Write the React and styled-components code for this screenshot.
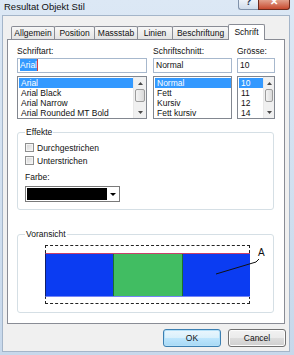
import styled, { createGlobalStyle } from "styled-components";

const GlobalStyle = createGlobalStyle`
  html, body { margin: 0; padding: 0; }
  body {
    font-family: "Liberation Sans", Arial, sans-serif;
    font-size: 8.5px;
    color: #111;
    background: #cfdff0;
  }
  * { box-sizing: border-box; }
`;

const tabs = [
  { name: "Allgemein", w: 44 },
  { name: "Position", w: 41 },
  { name: "Massstab", w: 44 },
  { name: "Linien", w: 36 },
  { name: "Beschriftung", w: 57 },
  { name: "Schrift", w: 37 },
];

const fonts = ["Arial", "Arial Black", "Arial Narrow", "Arial Rounded MT Bold"];
const styles = ["Normal", "Fett", "Kursiv", "Fett kursiv"];
const sizes = ["10", "11", "12", "14"];

function Arrow({ down }) {
  return (
    <svg width="5" height="3" viewBox="0 0 5 3">
      <path d={down ? "M0 0H5L2.5 3Z" : "M0 3H5L2.5 0Z"} fill="#4a4a4a" />
    </svg>
  );
}

function ScrollBar({ w }) {
  return (
    <Scroll $w={w}>
      <ScrollArrow><Arrow /></ScrollArrow>
      <Thumb />
      <ScrollArrow><Arrow down /></ScrollArrow>
    </Scroll>
  );
}

function ListBox({ items, scrollW }) {
  return (
    <List>
      <Items>
        {items.map((it, i) => (
          <Item key={it} $selected={i === 0}>{it}</Item>
        ))}
      </Items>
      <ScrollBar w={scrollW} />
    </List>
  );
}

export default function App() {
  return (
    <>
      <GlobalStyle />
      <Window>
        <TitleBar>
          <Title>Resultat Objekt Stil</Title>
          <Caption>
            <HelpButton>?</HelpButton>
            <CloseButton>✕</CloseButton>
          </Caption>
        </TitleBar>
        <Client>
          <TabStrip>
            {tabs.map((t) => (
              <Tab key={t.name} $w={t.w} $active={t.name === "Schrift"}>
                {t.name}
              </Tab>
            ))}
          </TabStrip>
          <Panel>
            <FontRow>
              <Column $w={130}>
                <Label>Schriftart:</Label>
                <TextBox><Selection>Arial</Selection></TextBox>
                <ListBox items={fonts} scrollW={13} />
              </Column>
              <Column $w={79}>
                <Label>Schriftschnitt:</Label>
                <TextBox>Normal</TextBox>
                <ListBox items={styles} scrollW={0} />
              </Column>
              <Column $w={38}>
                <Label>Grösse:</Label>
                <TextBox>10</TextBox>
                <ListBox items={sizes} scrollW={11} />
              </Column>
            </FontRow>

            <Group>
              <Legend>Effekte</Legend>
              <CheckRow><CheckBox />Durchgestrichen</CheckRow>
              <CheckRow><CheckBox />Unterstrichen</CheckRow>
              <FieldLabel>Farbe:</FieldLabel>
              <ColorSelect>
                <Swatch />
                <DropArrow>
                  <svg width="6" height="3" viewBox="0 0 6 3">
                    <path d="M0 0H6L3 3Z" fill="#000" />
                  </svg>
                </DropArrow>
              </ColorSelect>
            </Group>

            <Group $gap={19}>
              <Legend>Voransicht</Legend>
              <PreviewBox>
                <Bar>
                  <Segment $color="#0b3cf2" />
                  <Segment $color="#41bd62" $edged />
                  <Segment $color="#0b3cf2" />
                </Bar>
                <Leader width="50" height="40" viewBox="0 0 50 40">
                  <path d="M0 28L40 16L43 13" stroke="#111" strokeWidth="1" fill="none" />
                </Leader>
                <Marker>A</Marker>
              </PreviewBox>
            </Group>
          </Panel>
          <ButtonRow>
            <Button $default>OK</Button>
            <Button>Cancel</Button>
          </ButtonRow>
        </Client>
      </Window>
    </>
  );
}

const Window = styled.div`
  width: 294px;
  height: 355px;
  display: flex;
  flex-direction: column;
  padding: 0 4px 3px 2px;
  background: linear-gradient(#dce8f5, #c7d8eb);
`;

const TitleBar = styled.div`
  height: 15px;
  display: flex;
  justify-content: space-between;
  align-items: flex-start;
`;

const Title = styled.div`
  font-size: 9.5px;
  line-height: 14px;
  padding-left: 2px;
  color: #111;
`;

const Caption = styled.div`
  display: flex;
`;

const HelpButton = styled.div`
  width: 20px;
  height: 10px;
  overflow: hidden;
  border: 1px solid #8193ab;
  border-top: none;
  border-right: none;
  border-radius: 0 0 0 3px;
  background: linear-gradient(#eef3f9, #cfdbea);
  color: #2a3855;
  font-size: 10px;
  font-weight: bold;
  line-height: 4px;
  text-align: center;
`;

const CloseButton = styled.div`
  width: 32px;
  height: 10px;
  overflow: hidden;
  border: 1px solid #6d2a1d;
  border-top: none;
  border-radius: 0 0 3px 0;
  background: linear-gradient(#e2a08c, #c74a2f);
  color: #fff;
  font-size: 10px;
  font-weight: bold;
  line-height: 4px;
  text-align: center;
`;

const Client = styled.div`
  flex: 1;
  display: flex;
  flex-direction: column;
  background: #f0f0f0;
  border: 1px solid #a4b5c9;
  padding-top: 8px;
`;

const TabStrip = styled.div`
  display: flex;
  align-items: flex-end;
  height: 15px;
  margin: 0 4px;
  padding-left: 5px;
  position: relative;
  z-index: 1;
`;

const Tab = styled.div`
  width: ${(p) => p.$w}px;
  height: ${(p) => (p.$active ? 16 : 13)}px;
  margin-left: -1px;
  margin-bottom: ${(p) => (p.$active ? -1 : 0)}px;
  border: 1px solid #898c95;
  border-bottom: none;
  border-radius: 2px 2px 0 0;
  background: ${(p) => (p.$active ? "#fff" : "linear-gradient(#f7f7f7, #e3e3e3)")};
  line-height: ${(p) => (p.$active ? 15 : 12)}px;
  text-align: center;
  white-space: nowrap;
`;

const Panel = styled.div`
  margin: 0 4px;
  background: #fff;
  border: 1px solid #898c95;
  padding-bottom: 10px;
`;

const FontRow = styled.div`
  display: flex;
  gap: 6px;
  padding: 6px 9px 0;
  & > :last-child { margin-left: -1px; }
`;

const Column = styled.div`
  width: ${(p) => p.$w}px;
  display: flex;
  flex-direction: column;
`;

const Label = styled.div`
  height: 10px;
  line-height: 10px;
`;

const TextBox = styled.div`
  margin-top: 2px;
  height: 15px;
  border: 1px solid #a7b8cd;
  padding-left: 2px;
  line-height: 13px;
`;

const Selection = styled.span`
  background: #3399ff;
  color: #fff;
  padding: 1px 0;
  border-right: 1px solid #d04040;
`;

const List = styled.div`
  margin-top: 3px;
  height: 43px;
  border: 1px solid #828790;
  display: flex;
`;

const Items = styled.div`
  flex: 1;
  padding: 1px 0 0 1px;
  overflow: hidden;
`;

const Item = styled.div`
  height: 10px;
  line-height: 10px;
  padding-left: 2px;
  white-space: nowrap;
  background: ${(p) => (p.$selected ? "#3399ff" : "transparent")};
  color: ${(p) => (p.$selected ? "#fff" : "#111")};
`;

const Scroll = styled.div`
  width: ${(p) => p.$w}px;
  display: ${(p) => (p.$w ? "flex" : "none")};
  flex-direction: column;
  justify-content: space-between;
  background: #f0f0f0;
  border-left: 1px solid #e8e8e8;
`;

const ScrollArrow = styled.div`
  height: 12px;
  display: flex;
  align-items: center;
  justify-content: center;
`;

const Thumb = styled.div`
  height: 13px;
  margin: 0 1px auto;
  border: 1px solid #9c9c9c;
  border-radius: 2px;
  background: linear-gradient(90deg, #f4f4f4, #dadada);
`;

const Group = styled.fieldset`
  margin: ${(p) => p.$gap || 8}px 10px 0 9px;
  padding: 0 7px 7px;
  border: 1px solid #d5dfe5;
  border-radius: 3px;
  min-width: 0;
`;

const Legend = styled.legend`
  margin-left: 0;
  padding: 0 1px;
  line-height: 10px;
`;

const CheckRow = styled.div`
  display: flex;
  align-items: center;
  gap: 3px;
  height: 13px;
  &:first-of-type { margin-top: 4px; }
`;

const CheckBox = styled.span`
  width: 9px;
  height: 9px;
  border: 1px solid #8e8f8f;
  background: linear-gradient(135deg, #d4d4d4, #f6f6f6);
  box-shadow: inset 0 0 0 1px #f4f4f4;
`;

const FieldLabel = styled.div`
  margin-top: 5px;
  line-height: 10px;
`;

const ColorSelect = styled.div`
  margin-top: 4px;
  width: 95px;
  height: 16px;
  border: 1px solid #7a7a7a;
  padding: 1px;
  display: flex;
  background: #fff;
`;

const Swatch = styled.div`
  flex: 1;
  background: #000;
`;

const DropArrow = styled.div`
  width: 11px;
  display: flex;
  align-items: center;
  justify-content: center;
`;

const PreviewBox = styled.div`
  position: relative;
  margin: 6px 0 1px 20px;
  width: 205px;
  height: 59px;
  border: 1px dashed #222;
  padding: 7px 0 6px;
`;

const Bar = styled.div`
  display: flex;
  height: 44px;
  margin: 0 -1px;
  border-top: 1px solid #c8406a;
  border-bottom: 1px solid #7586f5;
  border-left: 1px solid #10206a;
`;

const Segment = styled.div`
  flex: 1;
  background: ${(p) => p.$color};
  border-left: ${(p) => (p.$edged ? "1px solid #1c6e30" : "none")};
  border-right: ${(p) => (p.$edged ? "1px solid #1c6e30" : "none")};
`;

const Leader = styled.svg`
  position: absolute;
  left: 170px;
  top: 0;
  overflow: visible;
`;

const Marker = styled.span`
  position: absolute;
  left: 212px;
  top: 2px;
  font-size: 10px;
  line-height: 10px;
`;

const ButtonRow = styled.div`
  display: flex;
  justify-content: flex-end;
  gap: 7px;
  margin-top: 5px;
  padding-right: 3px;
`;

const Button = styled.div`
  width: 58px;
  height: 18px;
  border: 1px solid ${(p) => (p.$default ? "#3c7fb1" : "#707070")};
  border-radius: 3px;
  background: ${(p) =>
    p.$default
      ? "linear-gradient(#eaf6fd, #d9f0fc 50%, #bee6fd 50%, #a7d9f5)"
      : "linear-gradient(#f2f2f2, #ebebeb 50%, #dddddd 50%, #cfcfcf)"};
  box-shadow: inset 0 0 0 1px ${(p) => (p.$default ? "#b4e0f8" : "#fcfcfc")};
  line-height: 16px;
  text-align: center;
`;
